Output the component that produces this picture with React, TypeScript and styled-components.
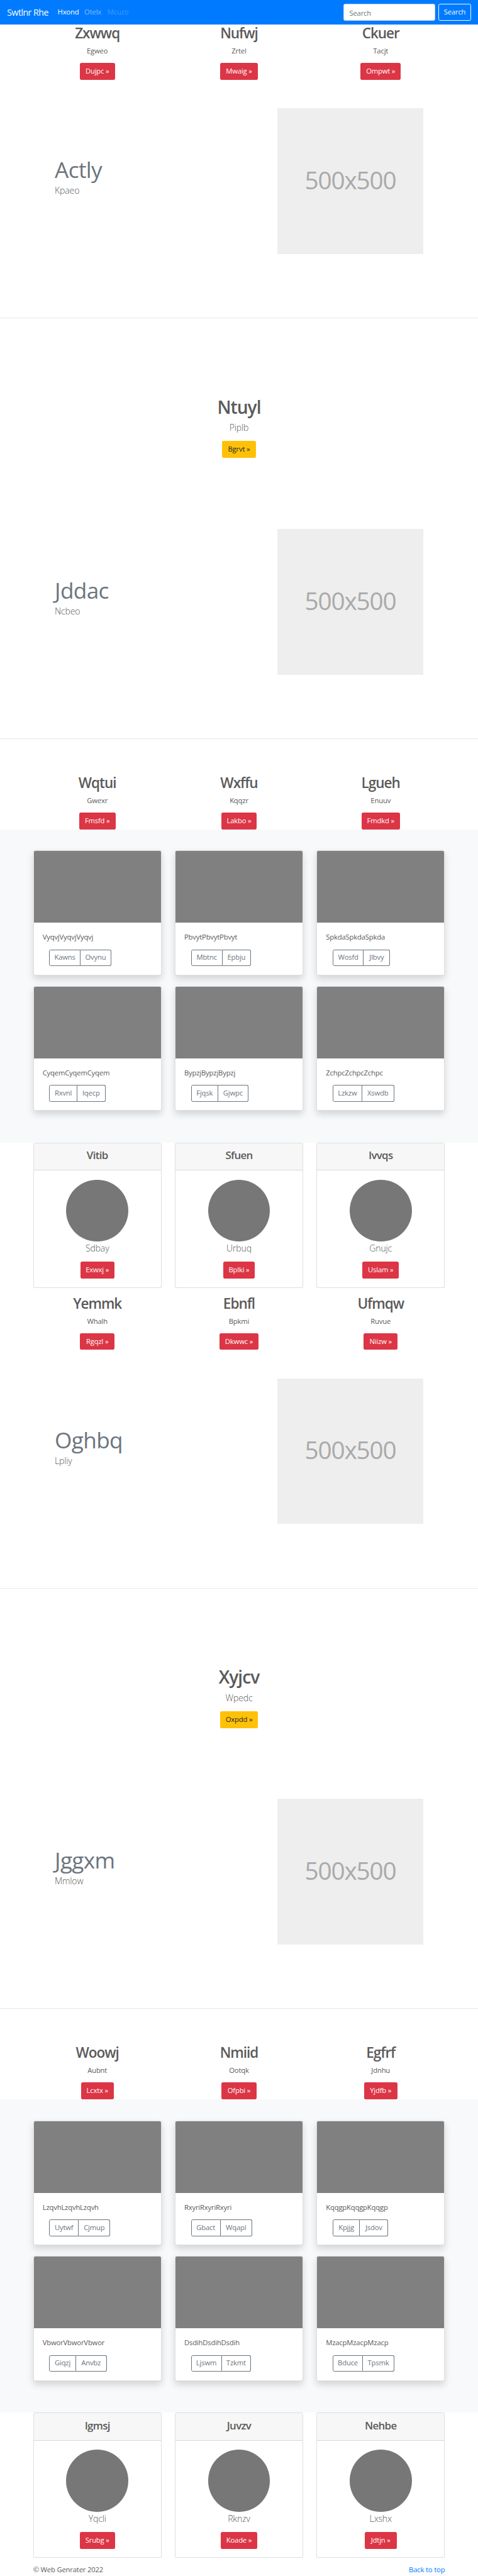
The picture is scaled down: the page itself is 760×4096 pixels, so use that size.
import React from "react";
import styled, { createGlobalStyle } from "styled-components";

// Design sizes are given on a 1080x5818 grid and rendered into a 760x4096 window.
const u = (n: number) => `${(n * 4096) / 5818}px`;

const Global = createGlobalStyle`
  *, *::before, *::after { box-sizing: border-box; }
  body {
    margin: 0;
    background: #fff;
    color: #5a5a5a;
    font-family: "Open Sans", "Noto Sans", sans-serif;
    font-size: ${u(16)};
    line-height: 1.5;
    letter-spacing: -0.015em;
    overflow-x: hidden;
  }
  h1, h2, h4, p { margin: 0; }
  a { text-decoration: none; }
`;

const Navbar = styled.nav`
  display: flex;
  align-items: center;
  height: ${u(56)};
  padding: 0 ${u(16)};
  background: #007bff;
`;

const Brand = styled.a`
  width: ${u(106)};
  color: #fff;
  font-size: ${u(20)};
  letter-spacing: -0.035em;
  white-space: nowrap;
`;

const NavLink = styled.a<{ $alpha: number; $w: number }>`
  width: ${(p) => u(p.$w + 16)};
  padding: 0 ${u(8)};
  color: rgba(255, 255, 255, ${(p) => p.$alpha});
  white-space: nowrap;
`;

const SearchForm = styled.form`
  display: flex;
  gap: ${u(8)};
  margin-left: auto;
`;

const SearchInput = styled.input`
  width: ${u(207)};
  height: ${u(38)};
  padding: ${u(2)} ${u(12)} 0;
  border: 1px solid #ced4da;
  border-radius: ${u(4)};
  background: #fff;
  font: inherit;
  letter-spacing: inherit;
  &::placeholder { color: #6c757d; opacity: 1; }
`;

const SearchButton = styled.button`
  width: ${u(73)};
  height: ${u(38)};
  padding: 0;
  border: 1px solid #f8f9fa;
  border-radius: ${u(4)};
  background: transparent;
  color: #f8f9fa;
  font: inherit;
  letter-spacing: inherit;
`;

const Grid = styled.div`
  display: grid;
  grid-template-columns: repeat(3, ${u(290)});
  column-gap: ${u(30)};
  width: ${u(930)};
  margin: 0 auto;
`;

const Column = styled.div`
  display: flex;
  flex-direction: column;
  align-items: center;
`;

const Heading = styled.h2`
  margin-bottom: ${u(6)};
  font-size: ${u(32)};
  font-weight: 600;
  line-height: ${u(40.4)};
  letter-spacing: -0.045em;
`;

const Text = styled.p`
  height: ${u(24)};
  margin-bottom: ${u(16)};
  line-height: ${u(25)};
`;

const Lead = styled.p`
  height: ${u(30)};
  font-size: ${u(20)};
  font-weight: 300;
  line-height: ${u(31.6)};
`;

const ActionButton = styled.a<{ $w: number; $warning?: boolean }>`
  display: flex;
  align-items: center;
  justify-content: center;
  width: ${(p) => u(p.$w)};
  height: ${u(38)};
  border-radius: ${u(4)};
  background: ${(p) => (p.$warning ? "#ffc107" : "#dc3545")};
  color: ${(p) => (p.$warning ? "#212529" : "#fff")};
  white-space: nowrap;
`;

const Feature = styled.section`
  display: flex;
  justify-content: space-between;
  width: ${u(832.2)};
  margin: 0 auto;
  padding: ${u(64)} 0;
`;

const FeatureCopy = styled.div`
  padding-top: ${u(108)};
`;

const FeatureTitle = styled.h2`
  height: ${u(60)};
  margin-bottom: ${u(2.5)};
  color: #6c757d;
  font-size: ${u(50)};
  font-weight: 400;
  line-height: ${u(60)};
  letter-spacing: -0.018em;
`;

const Placeholder = styled.div`
  display: flex;
  align-items: center;
  justify-content: center;
  width: ${u(329.17)};
  height: ${u(329.17)};
  padding-bottom: ${u(6)};
  background: #eee;
  color: #aaa;
  font-size: ${u(55)};
  letter-spacing: -0.03em;
`;

const Divider = styled.hr`
  height: 1px;
  margin: ${u(80)} 0 ${u(79.58)};
  border: 0;
  background: rgba(0, 0, 0, 0.09);
`;

const Banner = styled.section`
  display: flex;
  flex-direction: column;
  align-items: center;
  padding: ${u(96)} 0;
`;

const BannerTitle = styled.h1`
  margin-bottom: ${u(5.6)};
  font-size: ${u(40)};
  font-weight: 600;
  line-height: ${u(50.4)};
  letter-spacing: -0.035em;
`;

const BannerLead = styled(Lead)`
  margin-bottom: ${u(16)};
`;

const Album = styled.section`
  padding: ${u(48)} 0;
  background: #f8f9fa;
`;

const AlbumGrid = styled(Grid)`
  grid-auto-rows: ${u(282)};
  row-gap: ${u(24)};
  padding-bottom: ${u(24)};
`;

const AlbumCard = styled.article`
  border: 1px solid rgba(0, 0, 0, 0.125);
  border-radius: ${u(4)};
  background: #fff;
  box-shadow: 0 ${u(8)} ${u(16)} rgba(0, 0, 0, 0.15);
`;

const Thumb = styled.div`
  height: ${u(162)};
  border-radius: ${u(3)} ${u(3)} 0 0;
  background: #808080;
`;

const AlbumBody = styled.div`
  padding: ${u(20)};
`;

const ButtonGroup = styled.div`
  display: flex;
  height: ${u(38)};
  margin-left: ${u(15)};
`;

const GroupButton = styled.button<{ $w: number }>`
  width: ${(p) => u(p.$w)};
  padding: 0;
  border: 1px solid #6c757d;
  background: transparent;
  color: #6c757d;
  font: inherit;
  letter-spacing: inherit;
  &:first-child { border-radius: ${u(4)} 0 0 ${u(4)}; }
  &:last-child {
    border-left: 0;
    border-radius: 0 ${u(4)} ${u(4)} 0;
  }
`;

const ProfileCard = styled.article`
  height: ${u(327.8)};
  margin-bottom: ${u(16)};
  border: 1px solid rgba(0, 0, 0, 0.125);
  border-radius: ${u(4)};
  background: #fff;
`;

const ProfileHeader = styled.header`
  height: ${u(61.8)};
  padding-top: ${u(12)};
  border-bottom: 1px solid rgba(0, 0, 0, 0.125);
  background: #f7f7f7;
  text-align: center;
`;

const ProfileTitle = styled.h4`
  font-size: ${u(24)};
  font-weight: 600;
  line-height: ${u(30)};
  letter-spacing: -0.04em;
`;

const ProfileBody = styled(Column)`
  padding-top: ${u(20)};
`;

const Avatar = styled.div`
  width: ${u(140)};
  height: ${u(140)};
  border-radius: 50%;
  background: #777;
`;

const Footer = styled.footer`
  display: flex;
  justify-content: space-between;
  width: ${u(930)};
  height: ${u(24)};
  margin: 0 auto;
  line-height: ${u(24)};
`;

const TopLink = styled.a`
  color: #007bff;
`;

type Intro = [title: string, text: string, action: string, width: number];
type AlbumItem = [name: string, first: string, w1: number, second: string, w2: number];
type FeatureData = [title: string, text: string];

interface Block {
  intro: Intro[];
  featureA: FeatureData;
  banner: Intro;
  featureB: FeatureData;
  services: Intro[];
  album: AlbumItem[];
  profiles: Intro[];
}

const blocks: Block[] = [
  {
    intro: [
      ["Zxwwq", "Egweo", "Dujpc", 80],
      ["Nufwj", "Zrtel", "Mwaig", 85.4],
      ["Ckuer", "Tacjt", "Ompwt", 90.2],
    ],
    featureA: ["Actly", "Kpaeo"],
    banner: ["Ntuyl", "Piplb", "Bgrvt", 75.8],
    featureB: ["Jddac", "Ncbeo"],
    services: [
      ["Wqtui", "Gwexr", "Fmsfd", 82],
      ["Wxffu", "Kqqzr", "Lakbo", 80],
      ["Lgueh", "Enuuv", "Fmdkd", 86],
    ],
    album: [
      ["Vyqvj", "Kawns", 70.5, "Ovynu", 70],
      ["Pbvyt", "Mbtnc", 71.5, "Epbju", 64],
      ["Spkda", "Wosfd", 70.5, "Jlbvy", 59.6],
      ["Cyqem", "Rxvnl", 63.5, "Iqecp", 63.4],
      ["Bypzj", "Fjqsk", 61.8, "Gjwpc", 67.8],
      ["Zchpc", "Lzkzw", 67, "Xswdb", 72],
    ],
    profiles: [
      ["Vitib", "Sdbay", "Exwxj", 76.5],
      ["Sfuen", "Urbuq", "Bplki", 71.6],
      ["Ivvqs", "Gnujc", "Uslam", 82],
    ],
  },
  {
    intro: [
      ["Yemmk", "Whalh", "Rgqzl", 77.8],
      ["Ebnfl", "Bpkmi", "Dkwwc", 88.2],
      ["Ufmqw", "Ruvue", "Niizw", 77.1],
    ],
    featureA: ["Oghbq", "Lpliy"],
    banner: ["Xyjcv", "Wpedc", "Oxpdd", 85.4],
    featureB: ["Jggxm", "Mmlow"],
    services: [
      ["Woowj", "Aubnt", "Lcxtx", 73.7],
      ["Nmiid", "Ootqk", "Ofpbi", 78.5],
      ["Egfrf", "Jdnhu", "Yjdfb", 75],
    ],
    album: [
      ["Lzqvh", "Uytwf", 66.5, "Cjmup", 71.6],
      ["Rxyri", "Gbact", 67, "Wqapl", 71],
      ["Kqqgp", "Kpjjg", 61.8, "Jsdov", 64],
      ["Vbwor", "Giqzj", 60.5, "Anvbz", 69.2],
      ["Dsdih", "Ljswm", 69.7, "Tzkmt", 66.1],
      ["Mzacp", "Bduce", 69, "Tpsmk", 70],
    ],
    profiles: [
      ["Igmsj", "Yqcli", "Srubg", 80],
      ["Juvzv", "Rknzv", "Koade", 82.7],
      ["Nehbe", "Lxshx", "Jdtjn", 72.3],
    ],
  },
];

const IntroRow = ({ items }: { items: Intro[] }) => (
  <Grid>
    {items.map(([title, text, action, width]) => (
      <Column key={title}>
        <Heading>{title}</Heading>
        <Text>{text}</Text>
        <ActionButton $w={width}>{action} »</ActionButton>
      </Column>
    ))}
  </Grid>
);

const FeatureRow = ({ data: [title, text] }: { data: FeatureData }) => (
  <Feature>
    <FeatureCopy>
      <FeatureTitle>{title}</FeatureTitle>
      <Lead>{text}</Lead>
    </FeatureCopy>
    <Placeholder>500x500</Placeholder>
  </Feature>
);

const PageBlock = ({ block }: { block: Block }) => (
  <>
    <IntroRow items={block.intro} />
    <FeatureRow data={block.featureA} />
    <Divider />
    <Banner>
      <BannerTitle>{block.banner[0]}</BannerTitle>
      <BannerLead>{block.banner[1]}</BannerLead>
      <ActionButton $warning $w={block.banner[3]}>{block.banner[2]} »</ActionButton>
    </Banner>
    <FeatureRow data={block.featureB} />
    <Divider />
    <IntroRow items={block.services} />
    <Album>
      <AlbumGrid>
        {block.album.map(([name, first, w1, second, w2]) => (
          <AlbumCard key={name}>
            <Thumb />
            <AlbumBody>
              <Text>{name.repeat(3)}</Text>
              <ButtonGroup>
                <GroupButton $w={w1}>{first}</GroupButton>
                <GroupButton $w={w2}>{second}</GroupButton>
              </ButtonGroup>
            </AlbumBody>
          </AlbumCard>
        ))}
      </AlbumGrid>
    </Album>
    <Grid>
      {block.profiles.map(([title, text, action, width]) => (
        <ProfileCard key={title}>
          <ProfileHeader>
            <ProfileTitle>{title}</ProfileTitle>
          </ProfileHeader>
          <ProfileBody>
            <Avatar />
            <BannerLead>{text}</BannerLead>
            <ActionButton $w={width}>{action} »</ActionButton>
          </ProfileBody>
        </ProfileCard>
      ))}
    </Grid>
  </>
);

export default function App() {
  return (
    <>
      <Global />
      <Navbar>
        <Brand>Swtlnr Rhe</Brand>
        <NavLink $alpha={1} $w={44.5}>Hxond</NavLink>
        <NavLink $alpha={0.5} $w={36}>Otelx</NavLink>
        <NavLink $alpha={0.25} $w={46}>Mcuzo</NavLink>
        <SearchForm>
          <SearchInput placeholder="Search" />
          <SearchButton type="button">Search</SearchButton>
        </SearchForm>
      </Navbar>
      <main>
        {blocks.map((block) => (
          <PageBlock key={block.featureA[0]} block={block} />
        ))}
      </main>
      <Footer>
        <span>© Web Genrater 2022</span>
        <TopLink>Back to top</TopLink>
      </Footer>
    </>
  );
}
